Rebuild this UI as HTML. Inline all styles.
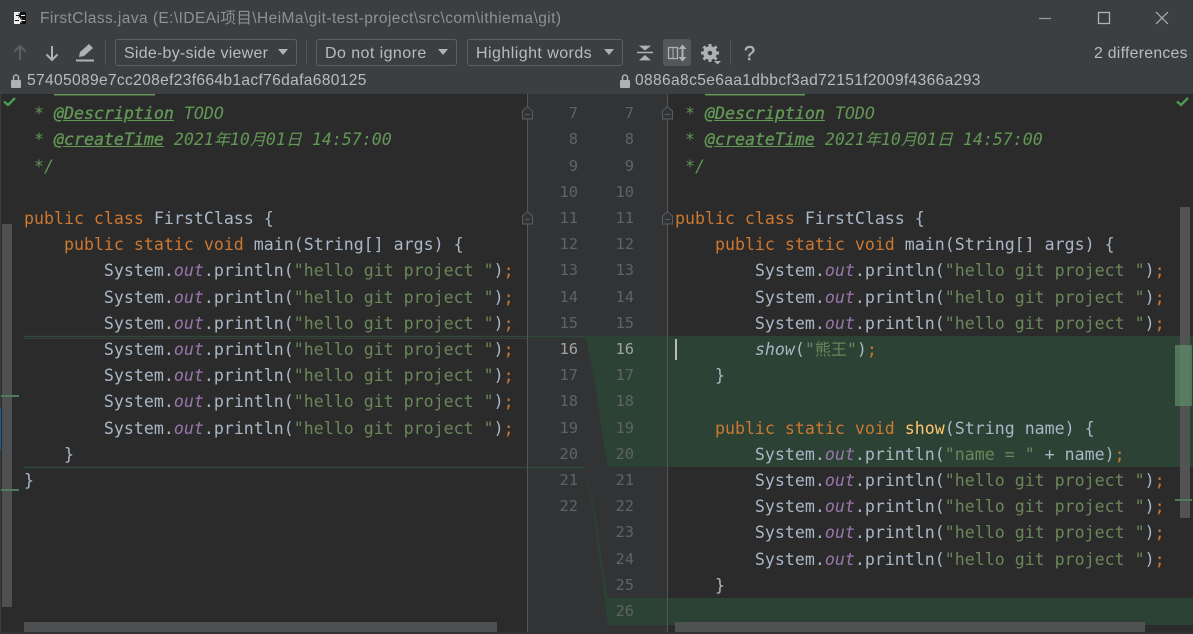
<!DOCTYPE html>
<html><head><meta charset="utf-8"><title>FirstClass.java</title>
<style>
*{margin:0;padding:0;box-sizing:border-box}
html,body{width:1193px;height:634px;overflow:hidden;background:#2b2b2b}
body{position:relative;font-family:"Liberation Sans","Noto Sans CJK SC",sans-serif}
.abs,.l,.n,.t{position:absolute}
.head{left:0;top:0;width:1193px;height:94px;background:#3c3f41}
.t{color:#bbb;font-size:15.6px;white-space:pre;line-height:20px}
.combo{position:absolute;top:39px;height:27px;border:1px solid #5e6060;border-radius:3px;color:#bbb;font-size:16px;line-height:28px;padding-left:8px;white-space:pre}
.combo:after{content:"";position:absolute;right:8px;top:9px;border-left:5.5px solid transparent;border-right:5.5px solid transparent;border-top:6.5px solid #afb1b3}
.pane{position:absolute;top:96px;height:536px;overflow:hidden;font-family:"DejaVu Sans Mono","Noto Sans CJK SC",monospace;font-size:16.6px}
.l{white-space:pre;line-height:26.2px;height:26.2px;color:#a9b7c6;left:0}
.k{color:#cc7832}.s{color:#6a8759}.f{color:#9876aa;font-style:italic}.m{font-style:italic;color:#a9b7c6}
.d{color:#629755;font-style:italic}.g{color:#629755;font-style:italic;font-weight:normal;-webkit-text-stroke:.35px #629755;text-decoration:underline}
.y{color:#ffc66d}
.c{font-size:16px;line-height:0;font-family:"Noto Sans CJK SC",sans-serif}
.n{font-family:"DejaVu Sans Mono",monospace;font-size:15.4px;line-height:26.2px;color:#606366;text-align:right;width:30px}
.h{color:#a4a3a3}
</style></head><body>

<div class="abs" style="left:0;top:94px;width:1193px;height:540px;background:#2b2b2b"></div>
<div class="abs" style="left:528px;top:94px;width:139px;height:538px;background:#313335"></div>

<!-- diff highlight -->
<svg class="abs" style="left:0;top:0" width="1193" height="634">
<path d="M585 336H1193V467H608C602 440 595 370 585 336Z" fill="#2c4235"/>
<path d="M585 467C595 500 602 565 608 598H1193V625H608C603 590 595 510 585 467Z" fill="#2c4235"/>
<path d="M24 336.500H585M24 467.500H585" stroke="#2d4a38" stroke-width="1.500" fill="none"/>
<path d="M24 338.500H527" stroke="#3a3d3c" fill="none"/>
<rect x="527" y="94" width="1" height="538" fill="#555"/>
<rect x="667" y="94" width="1" height="538" fill="#555"/>
<rect x="675" y="339" width="2" height="21" fill="#bbb"/>
</svg>

<!-- left code -->
<div class="pane" style="left:24px;width:503px">
<div class="l" style="top:5.200px"> <span class="d">* </span><span class="g">@Description</span><span class="d"> TODO</span></div>
<div class="l" style="top:31.400px"> <span class="d">* </span><span class="g">@createTime</span><span class="d"> 2021<span class="c">年</span>10<span class="c">月</span>01<span class="c">日</span> 14:57:00</span></div>
<div class="l" style="top:57.600px"> <span class="d">*/</span></div>
<div class="l" style="top:110px"><span class="k">public class</span> FirstClass {</div>
<div class="l" style="top:136.200px">    <span class="k">public static void</span> main(String[] args) {</div>
<div class="l" style="top:162.400px">        System.<span class="f">out</span>.println(<span class="s">"hello git project "</span>)<span class="k">;</span></div>
<div class="l" style="top:188.600px">        System.<span class="f">out</span>.println(<span class="s">"hello git project "</span>)<span class="k">;</span></div>
<div class="l" style="top:214.800px">        System.<span class="f">out</span>.println(<span class="s">"hello git project "</span>)<span class="k">;</span></div>
<div class="l" style="top:241px">        System.<span class="f">out</span>.println(<span class="s">"hello git project "</span>)<span class="k">;</span></div>
<div class="l" style="top:267.200px">        System.<span class="f">out</span>.println(<span class="s">"hello git project "</span>)<span class="k">;</span></div>
<div class="l" style="top:293.400px">        System.<span class="f">out</span>.println(<span class="s">"hello git project "</span>)<span class="k">;</span></div>
<div class="l" style="top:319.600px">        System.<span class="f">out</span>.println(<span class="s">"hello git project "</span>)<span class="k">;</span></div>
<div class="l" style="top:345.800px">    }</div>
<div class="l" style="top:372px">}</div>
</div>

<!-- right code -->
<div class="pane" style="left:675px;width:518px">
<div class="l" style="top:5.200px"> <span class="d">* </span><span class="g">@Description</span><span class="d"> TODO</span></div>
<div class="l" style="top:31.400px"> <span class="d">* </span><span class="g">@createTime</span><span class="d"> 2021<span class="c">年</span>10<span class="c">月</span>01<span class="c">日</span> 14:57:00</span></div>
<div class="l" style="top:57.600px"> <span class="d">*/</span></div>
<div class="l" style="top:110px"><span class="k">public class</span> FirstClass {</div>
<div class="l" style="top:136.200px">    <span class="k">public static void</span> main(String[] args) {</div>
<div class="l" style="top:162.400px">        System.<span class="f">out</span>.println(<span class="s">"hello git project "</span>)<span class="k">;</span></div>
<div class="l" style="top:188.600px">        System.<span class="f">out</span>.println(<span class="s">"hello git project "</span>)<span class="k">;</span></div>
<div class="l" style="top:214.800px">        System.<span class="f">out</span>.println(<span class="s">"hello git project "</span>)<span class="k">;</span></div>
<div class="l" style="top:241px">        <span class="m">show</span>(<span class="s">"<span class="c">熊王</span>"</span>)<span class="k">;</span></div>
<div class="l" style="top:267.200px">    }</div>
<div class="l" style="top:319.600px">    <span class="k">public static void</span> <span class="y">show</span>(String name) {</div>
<div class="l" style="top:345.800px">        System.<span class="f">out</span>.println(<span class="s">"name = "</span> + name)<span class="k">;</span></div>
<div class="l" style="top:372px">        System.<span class="f">out</span>.println(<span class="s">"hello git project "</span>)<span class="k">;</span></div>
<div class="l" style="top:398.200px">        System.<span class="f">out</span>.println(<span class="s">"hello git project "</span>)<span class="k">;</span></div>
<div class="l" style="top:424.400px">        System.<span class="f">out</span>.println(<span class="s">"hello git project "</span>)<span class="k">;</span></div>
<div class="l" style="top:450.600px">        System.<span class="f">out</span>.println(<span class="s">"hello git project "</span>)<span class="k">;</span></div>
<div class="l" style="top:476.800px">    }</div>
<div class="l" style="top:529.200px">}</div>
</div>

<!-- gutter numbers left (right edge 578) -->
<div class="n" style="left:548px;top:100.200px">7</div>
<div class="n" style="left:548px;top:126.400px">8</div>
<div class="n" style="left:548px;top:152.600px">9</div>
<div class="n" style="left:548px;top:178.800px">10</div>
<div class="n" style="left:548px;top:205px">11</div>
<div class="n" style="left:548px;top:231.200px">12</div>
<div class="n" style="left:548px;top:257.400px">13</div>
<div class="n" style="left:548px;top:283.600px">14</div>
<div class="n" style="left:548px;top:309.800px">15</div>
<div class="n h" style="left:548px;top:336px">16</div>
<div class="n" style="left:548px;top:362.200px">17</div>
<div class="n" style="left:548px;top:388.400px">18</div>
<div class="n" style="left:548px;top:414.600px">19</div>
<div class="n" style="left:548px;top:440.800px">20</div>
<div class="n" style="left:548px;top:467px">21</div>
<div class="n" style="left:548px;top:493.200px">22</div>
<!-- gutter numbers right (right edge 634) -->
<div class="n" style="left:604px;top:100.200px">7</div>
<div class="n" style="left:604px;top:126.400px">8</div>
<div class="n" style="left:604px;top:152.600px">9</div>
<div class="n" style="left:604px;top:178.800px">10</div>
<div class="n" style="left:604px;top:205px">11</div>
<div class="n" style="left:604px;top:231.200px">12</div>
<div class="n" style="left:604px;top:257.400px">13</div>
<div class="n" style="left:604px;top:283.600px">14</div>
<div class="n" style="left:604px;top:309.800px">15</div>
<div class="n h" style="left:604px;top:336px">16</div>
<div class="n" style="left:604px;top:362.200px">17</div>
<div class="n" style="left:604px;top:388.400px">18</div>
<div class="n" style="left:604px;top:414.600px">19</div>
<div class="n" style="left:604px;top:440.800px">20</div>
<div class="n" style="left:604px;top:467px">21</div>
<div class="n" style="left:604px;top:493.200px">22</div>
<div class="n" style="left:604px;top:519.400px">23</div>
<div class="n" style="left:604px;top:545.600px">24</div>
<div class="n" style="left:604px;top:571.800px">25</div>
<div class="n" style="left:604px;top:598px">26</div>

<!-- fold markers, scrollbars -->
<svg class="abs" style="left:0;top:0" width="1193" height="634">
<g fill="#313335" stroke="#5a5d5f">
<path d="M522.500 119V111L527.500 106.500L532.500 111V119Z"/>
<path d="M662.500 119V111L667.500 106.500L672.500 111V119Z"/>
<path d="M522.500 224V216L527.500 211.500L532.500 216V224Z"/>
<path d="M662.500 224V216L667.500 211.500L672.500 216V224Z"/>
<path d="M525 114.500H530M665 114.500H670M525 219.500H530M665 219.500H670"/>
</g>
<path d="M4 101.500L8 105L15 98" stroke="#499c54" stroke-width="2.400" fill="none"/>
<path d="M1177 101.500L1181 105L1188 98" stroke="#499c54" stroke-width="2.400" fill="none"/>
<rect x="2" y="224" width="10" height="383" fill="#4e4f50"/>
<rect x="1180" y="207" width="10" height="311" fill="#565758" opacity=".9"/>
<rect x="1175" y="345" width="17" height="61" fill="#5c8a68" opacity=".75"/>
<rect x="1175" y="499" width="17" height="2" fill="#4f7a5b"/>
<rect x="1" y="395" width="18" height="2" fill="#4f7a5b"/>
<rect x="1" y="489" width="18" height="2" fill="#4f7a5b"/>
<rect x="24" y="622" width="473" height="10" fill="#4e4f50"/>
<rect x="675" y="622" width="470" height="10" fill="#505251"/>
<rect x="0" y="632" width="1193" height="2" fill="#2f3132"/>
<rect x="0" y="94" width="1" height="540" fill="#3a3c3e"/>
<rect x="0" y="408" width="1" height="42" fill="#1d5c8c"/>
</svg>

<!-- header -->
<div class="abs head"></div>
<svg class="abs" style="left:0;top:0" width="1193" height="97">
<!-- app icon -->
<rect x="14" y="12" width="12" height="12" fill="#111"/>
<rect x="14" y="12" width="6" height="12" fill="#eee"/>
<path d="M16 15.500H21M18.500 13.500L21 15.500L18.500 17.500" stroke="#111" fill="none"/>
<path d="M21 15.500H25" stroke="#eee"/>
<path d="M19 20.500H25M21.500 18.500L19 20.500L21.500 22.500" stroke="#eee" fill="none"/>
<path d="M15 20.500H19" stroke="#111"/>
<!-- window controls -->
<path d="M1039 18.500H1051" stroke="#9a9c9e" stroke-width="1.200"/>
<rect x="1098.500" y="12.500" width="11" height="11" fill="none" stroke="#b0b2b3" stroke-width="1.300"/>
<path d="M1156 12L1168 24M1168 12L1156 24" stroke="#b0b2b3" stroke-width="1.200"/>
<!-- up/down -->
<path d="M20 60V46M14.500 51.500L20 46L25.500 51.500" stroke="#5d6062" stroke-width="2" fill="none"/>
<path d="M52 46V60M46.500 54.500L52 60L57.500 54.500" stroke="#afb1b3" stroke-width="2" fill="none"/>
<!-- pencil -->
<path d="M79 57L80 52L89 44L93 48L84 56Z" fill="#afb1b3"/>
<rect x="76" y="59.500" width="18" height="2" fill="#afb1b3"/>
<rect x="105" y="40" width="1" height="25" fill="#515557"/>
<rect x="306" y="40" width="1" height="25" fill="#515557"/>
<!-- collapse -->
<path d="M637 52.500H653" stroke="#afb1b3" stroke-width="1.500"/>
<path d="M640 46H650L645 50ZM640 60H650L645 55.500Z" fill="#afb1b3" stroke="#afb1b3" stroke-width=".8"/>
<!-- active toggle -->
<rect x="663" y="39" width="28" height="27" rx="3" fill="#54585a"/>
<rect x="668.500" y="47.500" width="9" height="11" fill="none" stroke="#afb1b3" stroke-width="1.300"/>
<path d="M673 47V59" stroke="#afb1b3"/>
<path d="M682.500 46V60" stroke="#afb1b3" stroke-width="2"/>
<path d="M678.500 49L682.500 44.500L686.500 49ZM678.500 57L682.500 61.500L686.500 57Z" fill="#afb1b3"/>
<!-- gear -->
<circle cx="710" cy="53" r="4.500" fill="none" stroke="#afb1b3" stroke-width="4.500"/>
<path d="M710 44V47M710 59V62M701 53H704M716 53H719M703.500 46.500L705.700 48.700M714.300 57.300L716.500 59.500M716.500 46.500L714.300 48.700M705.700 57.300L703.500 59.500" stroke="#afb1b3" stroke-width="3"/>
<path d="M714 61H721L717.500 64.500Z" fill="#afb1b3"/>
<rect x="730" y="40" width="1" height="25" fill="#515557"/>
<!-- locks -->
<g fill="#afb1b3"><rect x="11" y="80" width="10" height="8" rx="1"/>
<rect x="620" y="80" width="10" height="8" rx="1"/></g>
<path d="M13.500 80V77.500A2.500 2.500 0 0 1 18.500 77.500V80M622.500 80V77.500A2.500 2.500 0 0 1 627.500 77.500V80" stroke="#afb1b3" stroke-width="1.500" fill="none"/>
<!-- clipped line above -->
<rect x="54" y="94" width="101" height="1.500" fill="#629755"/>
<rect x="705" y="94" width="100" height="1.500" fill="#629755"/>
</svg>
<div class="t" style="left:40px;top:9px;color:#8d9194;font-size:15.500px;letter-spacing:.43px">FirstClass.java (E:\IDEAi项目\HeiMa\git-test-project\src\com\ithiema\git)</div>
<div class="combo" style="left:115px;width:182px;letter-spacing:.24px">Side-by-side viewer</div>
<div class="combo" style="left:316px;width:141px;letter-spacing:.43px">Do not ignore</div>
<div class="combo" style="left:467px;width:156px;letter-spacing:.45px">Highlight words</div>
<div class="t" style="left:744px;top:44px;font-size:20px;color:#afb1b3;-webkit-text-stroke:.5px #afb1b3">?</div>
<div class="t" style="left:1094px;top:44px;font-size:15.800px;letter-spacing:.28px">2 differences</div>
<div class="t" style="left:27px;top:71px;font-size:15.600px;letter-spacing:.32px">57405089e7cc208ef23f664b1acf76dafa680125</div>
<div class="t" style="left:635px;top:71px;font-size:15.600px;letter-spacing:.34px">0886a8c5e6aa1dbbcf3ad72151f2009f4366a293</div>
</body></html>
